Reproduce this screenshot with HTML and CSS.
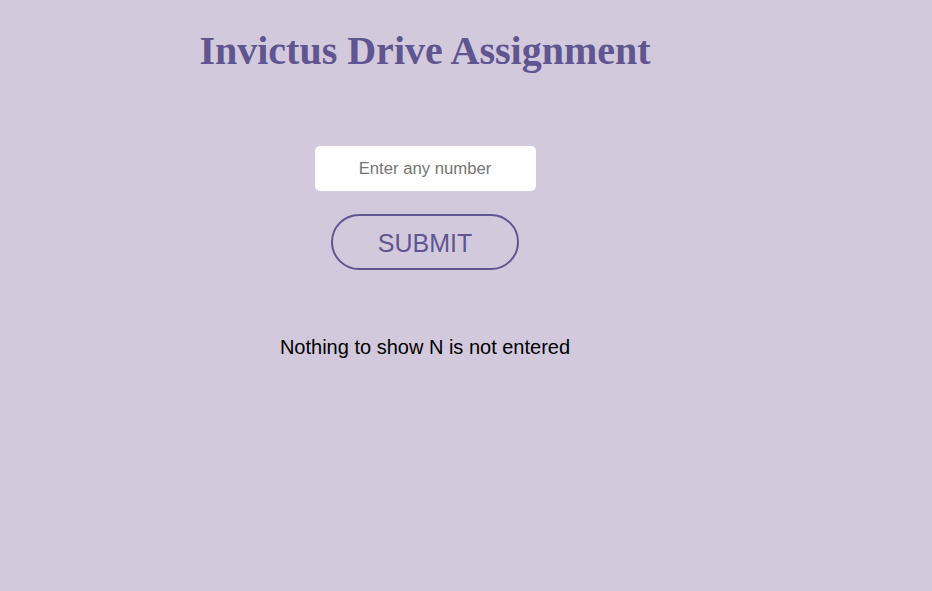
FILE: index.html
```html
<!DOCTYPE html>
<html>
<head>
<meta charset="utf-8">
<link rel="stylesheet" href="styles.css">
</head>
<body>
<div class="app">
  <h1 class="title">Invictus Drive Assignment</h1>
  <form class="form">
    <input class="num-input" type="text" placeholder="Enter any number">
    <button class="submit" type="button">SUBMIT</button>
  </form>
  <p class="result">Nothing to show N is not entered</p>
</div>
</body>
</html>
```
FILE: styles.css
```css
html, body {
  margin: 0;
  padding: 0;
  background: #d3c9dc;
  height: 100%;
}
body {
  padding: 0 8px;
}
.app {
  width: 834px;
  display: flex;
  flex-direction: column;
  align-items: center;
  font-family: "Liberation Sans", Arial, sans-serif;
}
.title {
  margin: 28px 0 0;
  font-family: "Liberation Serif", "Times New Roman", serif;
  font-weight: bold;
  font-size: 40px;
  line-height: 46px;
  color: #5f5590;
}
.form {
  margin-top: 72px;
  display: flex;
  flex-direction: column;
  align-items: center;
  gap: 23px;
}
.num-input {
  box-sizing: border-box;
  width: 221px;
  height: 45px;
  border: none;
  border-radius: 5px;
  background: #fff;
  font-family: "Liberation Sans", Arial, sans-serif;
  font-size: 16.7px;
  text-align: center;
  outline: none;
  padding: 0 8px;
}
.num-input::placeholder {
  color: #757575;
}
.submit {
  box-sizing: border-box;
  width: 188px;
  height: 56px;
  border: 2px solid #5f5590;
  border-radius: 28px;
  background: transparent;
  color: #5f5590;
  font-family: "Liberation Sans", Arial, sans-serif;
  font-size: 25px;
  padding: 2px 0 0;
}
.result {
  margin: 65px 0 0;
  font-size: 20px;
  line-height: 24px;
  color: #000;
}
```
